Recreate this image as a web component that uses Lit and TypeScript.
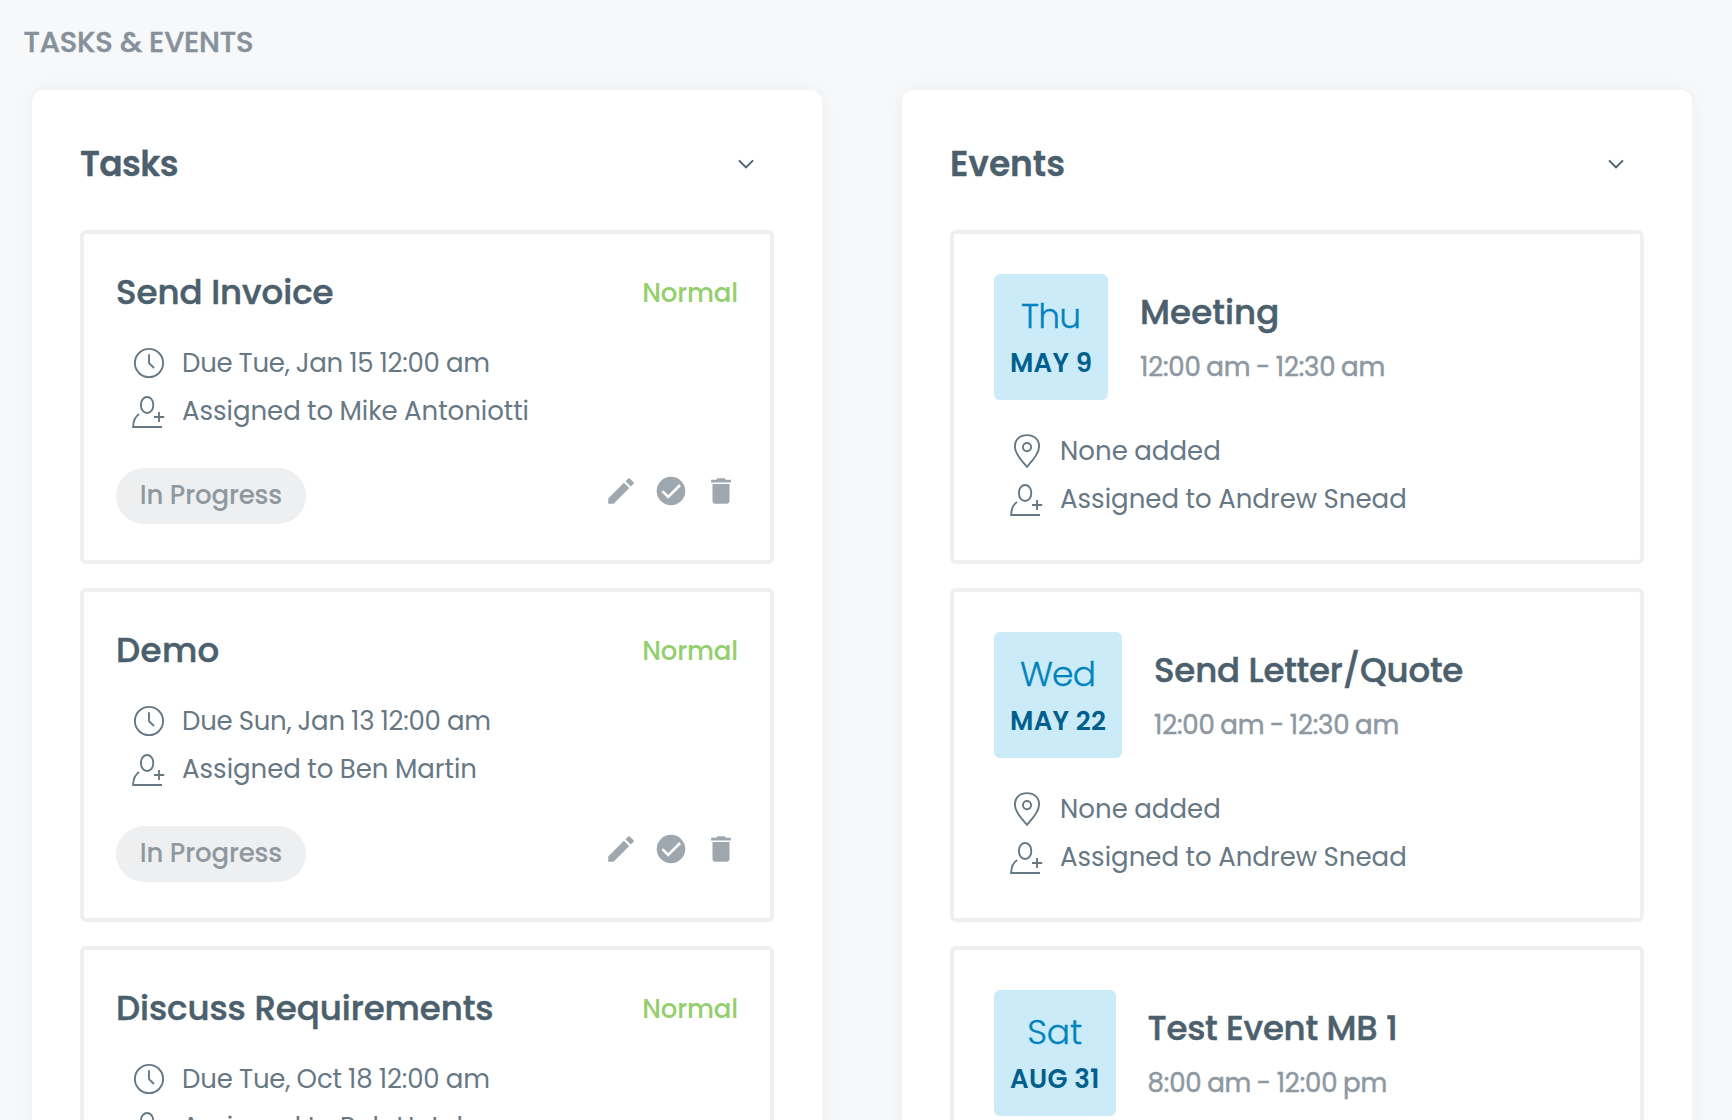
import { LitElement, html, css, svg } from "lit";
import { customElement, property } from "lit/decorators.js";

/** One line of text whose tracking is adjusted so that it spans `span` pixels. */
@customElement("tracked-text")
class TrackedText extends LitElement {
  @property() text = "";
  @property({ type: Number }) span = 0;

  static styles = css`
    :host { display: block; white-space: nowrap; }
    .run { display: inline-block; white-space: pre; }
  `;

  updated() {
    const run = this.renderRoot.querySelector(".run") as HTMLElement;
    run.style.letterSpacing = "0";
    run.style.marginRight = "0";
    const natural = run.getBoundingClientRect().width;
    const gap = (this.span - natural) / Math.max(1, this.text.length - 1);
    run.style.letterSpacing = `${gap}px`;
    run.style.marginRight = `${-gap}px`;
  }

  render() {
    return html`<span class="run">${this.text}</span>`;
  }
}

const clockIcon = html`<svg class="glyph" viewBox="0 0 34 36">
  <circle cx="17" cy="18" r="14.1" />
  <path d="M17 9.2V18.2L22 23" />
</svg>`;

const personIcon = html`<svg class="glyph" viewBox="0 0 34 36">
  <rect x="9" y="4" width="12.2" height="16" rx="6.1" ry="7" />
  <path d="M7.2 21C3.4 23.2 1.3 27.5 1.1 34H30M22 24H32.2M27 19V29" />
</svg>`;

const pinIcon = html`<svg class="glyph" viewBox="0 0 34 36">
  <path d="M17 33.8C12.4 28.8 4.9 21.3 4.9 13.6C4.9 6.4 10 2.1 17 2.1S29.1 6.4 29.1 13.6C29.1 21.3 21.6 28.8 17 33.8Z" />
  <circle cx="17" cy="14.1" r="4.1" />
</svg>`;

const chevron = html`<svg class="chevron" viewBox="0 0 20 20"><path d="M3 6.3L10 13.4L17 6.3" /></svg>`;

const action = (shape: unknown) => html`<svg class="action" viewBox="0 0 24 24">${shape}</svg>`;

const pencil = svg`<path d="M3 17.25V21h3.75L17.81 9.94l-3.75-3.75L3 17.25zM20.71 7.04c.39-.39.39-1.02 0-1.41l-2.34-2.34c-.39-.39-1.02-.39-1.41 0l-1.83 1.83 3.75 3.75 1.83-1.83z"/>`;
const check = svg`<circle cx="12" cy="12" r="10.1"/><path class="tick" d="M5.9 12.1L10 16.2L18.4 7.8"/>`;
const trash = svg`<path d="M6 19c0 1.1.9 2 2 2h8c1.1 0 2-.9 2-2V7H6v12zM19 4h-3.5l-1-1h-5l-1 1H5v2h14V4z"/>`;

const t = (cls: string, text: string, span: number) =>
  html`<tracked-text class=${cls} .text=${text} .span=${span}></tracked-text>`;

interface Task { title: string; titleW: number; due: string; dueW: number; who: string; whoW: number; }
interface Meeting { day: string; dayW: number; date: string; dateW: number; title: string; titleW: number; time: string; timeW: number; }

const tasks: Task[] = [
  { title: "Send Invoice", titleW: 217.5, due: "Due Tue, Jan 15 12:00 am", dueW: 308, who: "Assigned to Mike Antoniotti", whoW: 347 },
  { title: "Demo", titleW: 103.3, due: "Due Sun, Jan 13 12:00 am", dueW: 309, who: "Assigned to Ben Martin", whoW: 295 },
  { title: "Discuss Requirements", titleW: 377.5, due: "Due Tue, Oct 18 12:00 am", dueW: 308, who: "Assigned to Rob Hotel", whoW: 281 },
];

const meetings: Meeting[] = [
  { day: "Thu", dayW: 60, date: "MAY 9", dateW: 82, title: "Meeting", titleW: 139.3, time: "12:00 am - 12:30 am", timeW: 245.2 },
  { day: "Wed", dayW: 76, date: "MAY 22", dateW: 96, title: "Send Letter/Quote", titleW: 309.3, time: "12:00 am - 12:30 am", timeW: 245.2 },
  { day: "Sat", dayW: 55, date: "AUG 31", dateW: 89.5, title: "Test Event MB 1", titleW: 250.3, time: "8:00 am - 12:00 pm", timeW: 239.8 },
];

@customElement("app-root")
class AppRoot extends LitElement {
  static styles = css`
    :host {
      display: block;
      box-sizing: border-box;
      height: 1120px;
      overflow: hidden;
      background: #f7f8fa;
      font-family: Poppins, Inter, "Liberation Sans", sans-serif;
      color: #4b5f6d;
    }
    * { box-sizing: border-box; }
    .heading { height: 90px; padding: 22px 0 0 23.5px; font-size: 29px; line-height: 40px; font-weight: 500; color: #87919c; -webkit-text-stroke: 0.5px; }
    .columns { display: grid; grid-template-columns: 790px 790px; gap: 80px; padding-left: 32px; }
    .panel { height: 1240px; padding: 48px; background: #fff; border-radius: 12px; box-shadow: 0 0 24px rgba(0, 0, 0, 0.045); }
    .panel-head { display: flex; justify-content: space-between; align-items: center; height: 52px; padding-right: 18px; }
    .panel-title { font-size: 34.5px; line-height: 52px; font-weight: 600; -webkit-text-stroke: 0.3px; }
    .chevron { width: 20px; height: 20px; fill: none; stroke: #4b5f6d; stroke-width: 1.9; }
    .list { display: flex; flex-direction: column; gap: 24px; padding-top: 40px; }
    .card { height: 334px; border: 4px solid #edeff1; border-radius: 6px; }
    .task { padding: 32px; }
    .row { display: flex; justify-content: space-between; align-items: center; }
    .title { font-size: 34px; line-height: 50px; font-weight: 500; -webkit-text-stroke: 0.5px; }
    .task .title { padding-top: 1px; }
    .priority { padding-top: 3px; font-size: 26px; line-height: 48px; font-weight: 500; color: #93cf6d; }
    .details { display: flex; flex-direction: column; padding: 22px 0 0 16px; }
    .detail { display: flex; align-items: center; gap: 16px; height: 48px; font-size: 26px; line-height: 48px; color: #677885; }
    .label { word-spacing: -0.5px; }
    .glyph { width: 34px; height: 36px; fill: none; stroke: #677885; stroke-width: 1.9; }
    .foot { padding-top: 33px; align-items: flex-start; }
    .pill { display: flex; justify-content: center; width: 190px; height: 56px; border-radius: 28px; background: #edeff1; }
    .status { font-size: 26px; line-height: 54px; font-weight: 500; color: #8f989f; }
    .actions { display: flex; gap: 16px; padding-top: 6px; }
    .action { display: block; width: 34px; height: 34px; fill: #9fa7ae; }
    .tick { fill: none; stroke: #fff; stroke-width: 1.9; }
    .event { padding: 40px; }
    .summary { display: flex; gap: 32px; }
    .date-box { display: flex; flex-direction: column; align-items: center; height: 126px; padding: 17px 16px 0; border-radius: 6px; background: #cbebf8; }
    .day { font-size: 34.5px; line-height: 50px; font-weight: 300; color: #0083bd; -webkit-text-stroke: 0.3px; }
    .date { font-size: 26px; line-height: 44px; font-weight: 600; color: #005f8d; }
    .about { padding-top: 13px; }
    .time { font-size: 26px; line-height: 60px; font-weight: 400; color: #8d98a2; word-spacing: -1.2px; -webkit-text-stroke: 0.5px; }
    .event .details { padding-top: 27px; }
  `;

  private task(k: Task) {
    return html`<article class="card task">
      <div class="row">${t("title", k.title, k.titleW)}${t("priority", "Normal", 95.7)}</div>
      <div class="details">
        <div class="detail">${clockIcon}${t("label", k.due, k.dueW)}</div>
        <div class="detail">${personIcon}${t("label", k.who, k.whoW)}</div>
      </div>
      <div class="row foot">
        <div class="pill">${t("status", "In Progress", 142.5)}</div>
        <div class="actions">${action(pencil)}${action(check)}${action(trash)}</div>
      </div>
    </article>`;
  }

  private meeting(m: Meeting) {
    return html`<article class="card event">
      <div class="summary">
        <div class="date-box">${t("day", m.day, m.dayW)}${t("date", m.date, m.dateW)}</div>
        <div class="about">${t("title", m.title, m.titleW)}${t("time", m.time, m.timeW)}</div>
      </div>
      <div class="details">
        <div class="detail">${pinIcon}${t("label", "None added", 160.8)}</div>
        <div class="detail">${personIcon}${t("label", "Assigned to Andrew Snead", 346.8)}</div>
      </div>
    </article>`;
  }

  render() {
    return html`
      <header class="heading">${t("caption", "TASKS & EVENTS", 230)}</header>
      <main class="columns">
        <section class="panel">
          <div class="panel-head">${t("panel-title", "Tasks", 98.5)}${chevron}</div>
          <div class="list">${tasks.map((k) => this.task(k))}</div>
        </section>
        <section class="panel">
          <div class="panel-head">${t("panel-title", "Events", 115)}${chevron}</div>
          <div class="list">${meetings.map((m) => this.meeting(m))}</div>
        </section>
      </main>
    `;
  }
}
